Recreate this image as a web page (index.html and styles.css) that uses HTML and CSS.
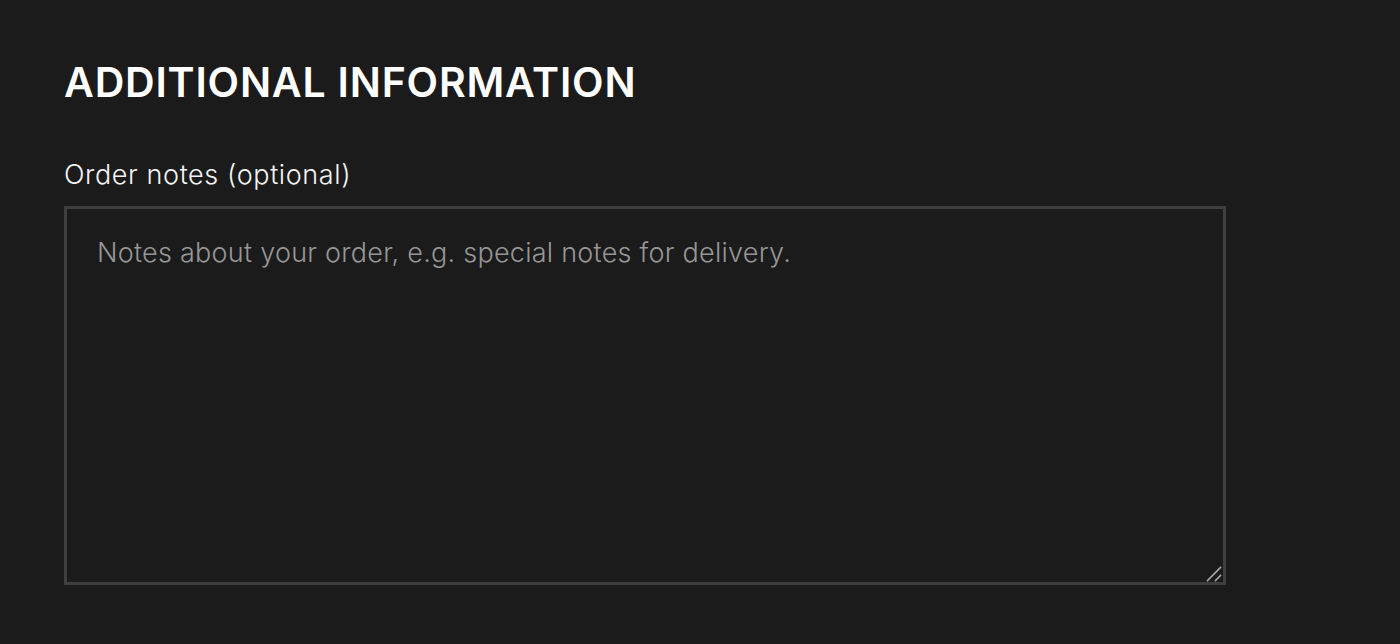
FILE: index.html
```html
<!DOCTYPE html>
<html>
<head>
<meta charset="utf-8">
<link rel="stylesheet" href="styles.css">
</head>
<body>
<div class="wrap">
  <h3 class="title">ADDITIONAL INFORMATION</h3>
  <label class="label" for="notes">Order notes (optional)</label>
  <div class="field">
    <textarea id="notes" class="notes" placeholder="Notes about your order, e.g. special notes for delivery."></textarea>
    <svg class="grip" width="16" height="16" viewBox="0 0 16 16" aria-hidden="true">
      <line x1="1.5" y1="14.5" x2="14.5" y2="1.5" stroke="#a8a8a8" stroke-width="1.6" stroke-linecap="square"/>
      <line x1="9.5" y1="14.5" x2="14.5" y2="9.5" stroke="#a8a8a8" stroke-width="1.6" stroke-linecap="square"/>
    </svg>
  </div>
</div>
</body>
</html>
```
FILE: styles.css
```css
html, body {
  margin: 0;
  padding: 0;
  background: #1b1b1b;
}
body {
  font-family: Inter, "Noto Sans", sans-serif;
  color: #ffffff;
}
.wrap {
  padding: 57px 64px 0 64px;
  width: 1162px;
}
.title {
  margin: 0 0 52px 0;
  font-size: 41px;
  font-weight: 600;
  line-height: 50px;
  letter-spacing: 0.8px;
}
.label {
  display: block;
  font-size: 27px;
  line-height: 32px;
  margin-bottom: 15px;
  font-weight: 300;
  letter-spacing: 0.6px;
  color: #f4f4f4;
}
.field {
  position: relative;
  width: 1162px;
  height: 379px;
}
.notes {
  display: block;
  box-sizing: border-box;
  width: 100%;
  height: 100%;
  background: #1b1b1b;
  border: 3px solid #3f3f3f;
  padding: 27px 30px;
  margin: 0;
  color: #ffffff;
  font-family: Inter, "Noto Sans", sans-serif;
  font-size: 27px;
  font-weight: 300;
  letter-spacing: 0.25px;
  line-height: 34px;
  resize: none;
  outline: none;
}
.notes::placeholder {
  color: #969696;
  opacity: 1;
}
.grip {
  position: absolute;
  right: 4px;
  bottom: 3px;
  pointer-events: none;
}
```
